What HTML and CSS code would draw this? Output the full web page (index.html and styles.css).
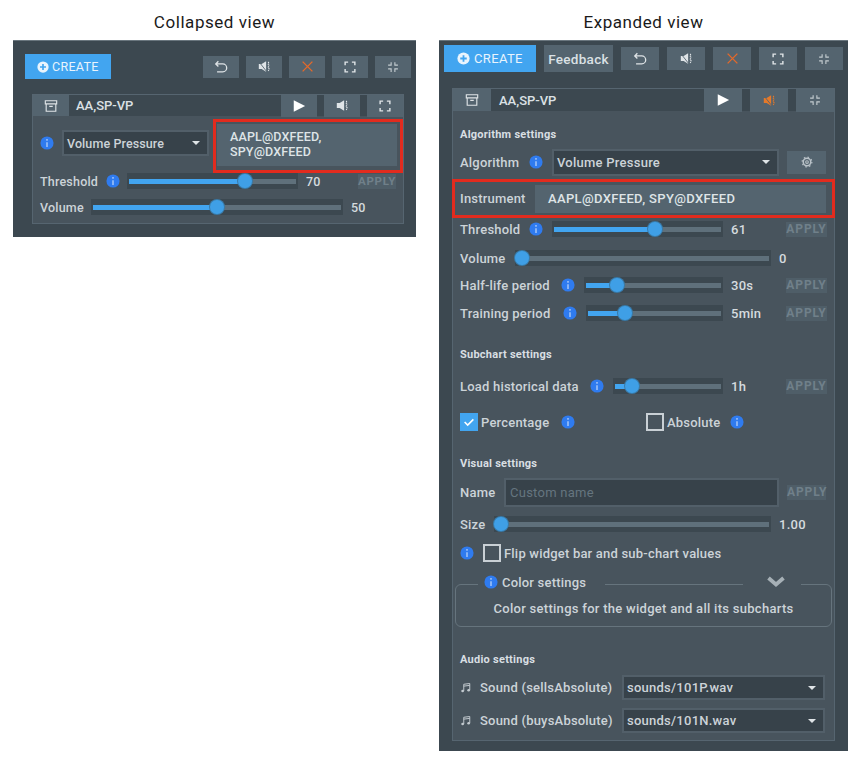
FILE: index.html
```html
<!DOCTYPE html>
<html lang="en">
<head>
<meta charset="utf-8">
<title>Collapsed and expanded view</title>
<link rel="stylesheet" href="styles.css">
</head>
<body>
<svg class="defs" width="0" height="0" aria-hidden="true">
  <symbol id="i-undo" viewBox="0 0 16 16"><path d="M5 1.500 2 4.500l3 3M2.500 4.500H10a4 4 0 0 1 0 9H3.500" fill="none" stroke="currentColor" stroke-width="1.500"/></symbol>
  <symbol id="i-mute" viewBox="0 0 16 16"><path d="M1 5h3.500L10 1.500v13L4.500 11H1z" fill="currentColor"/><path d="m1 2 9.500 12" stroke="#54646f" stroke-width="1.100"/><path d="M12.500 2.500c1.500 1 -.6 2.300 .6 3.500S11.500 9 13 10s-.5 2.500 0 3.500" fill="none" stroke="currentColor" stroke-width="1.500" stroke-dasharray="1.800 .8"/></symbol>
  <symbol id="i-sound" viewBox="0 0 16 16"><path d="M1 5h3.500L10 1.500v13L4.500 11H1z" fill="currentColor"/><path d="M12.500 2.500c1.500 1 -.6 2.300 .6 3.500S11.500 9 13 10s-.5 2.500 0 3.500" fill="none" stroke="currentColor" stroke-width="1.500" stroke-dasharray="1.800 .8"/></symbol>
  <symbol id="i-x" viewBox="0 0 16 16"><path d="m2 2 12 12M14 2 2 14" stroke="currentColor" stroke-width="1.700" fill="none"/></symbol>
  <symbol id="i-full" viewBox="0 0 16 16"><path d="M1.500 5.500v-4h4M10.500 1.500h4v4M14.500 10.500v4h-4M5.500 14.500h-4v-4" fill="none" stroke="currentColor" stroke-width="1.900"/></symbol>
  <symbol id="i-shrink" viewBox="0 0 16 16"><path d="M5.500 1.500v4H1.500M10.500 1.500v4h4M10.500 14.500v-4h4M5.500 14.500v-4H1.500" fill="none" stroke="currentColor" stroke-width="1.500"/></symbol>
  <symbol id="i-play" viewBox="0 0 16 16"><path d="M2 1.500 15 8 2 14.500z" fill="currentColor"/></symbol>
  <symbol id="i-archive" viewBox="0 0 16 16"><path d="M1.500 2h13v3.500h-13zM2.500 5.500V14h11V5.500M6 8.500h4" fill="none" stroke="currentColor" stroke-width="1.300"/></symbol>
  <symbol id="i-plus" viewBox="0 0 16 16"><circle cx="8" cy="8" r="7.500" fill="currentColor"/><path d="M8 4v8M4 8h8" stroke="#42a5f0" stroke-width="2.200"/></symbol>
  <symbol id="i-info" viewBox="0 0 16 16"><circle cx="8" cy="8" r="7.500" fill="#2f7bef"/><path d="M8 3.500v2M8 7v5.500" stroke="#9fc3f7" stroke-width="1.800"/></symbol>
  <symbol id="i-gear" viewBox="0 0 16 16"><circle cx="8" cy="8" r="1.800" fill="none" stroke="currentColor" stroke-width="1.400"/><circle cx="8" cy="8" r="5" fill="none" stroke="currentColor" stroke-width="2"/><circle cx="8" cy="8" r="6.500" fill="none" stroke="currentColor" stroke-width="1.600" stroke-dasharray="2 3.100"/></symbol>
  <symbol id="i-music" viewBox="0 0 16 16"><path d="M5 12V3l8-1v9" fill="none" stroke="currentColor" stroke-width="1.300"/><path d="M5 5.500 13 4.500" stroke="currentColor" stroke-width="1.300"/><circle cx="3.500" cy="12" r="1.800" fill="currentColor"/><circle cx="11.500" cy="11" r="1.800" fill="currentColor"/></symbol>
  <symbol id="i-check" viewBox="0 0 16 16"><path d="m3 8 3.500 3.500L13 5" fill="none" stroke="#fff" stroke-width="1.800"/></symbol>
  <symbol id="i-chev" viewBox="0 0 18 12"><path d="m1.500 2 7.500 6.500L16.500 2" fill="none" stroke="currentColor" stroke-width="3.800"/></symbol>
</svg>

<main class="page">
  <section class="col col-collapsed">
    <h2 class="view-title">Collapsed view</h2>
    <div class="panel panel-collapsed">
      <div class="topbar topbar-c">
        <button class="create create-c"><svg class="ic12"><use href="#i-plus"/></svg>CREATE</button>
        <span class="spacer"></span>
        <button class="btn btn-c"><svg class="ic14"><use href="#i-undo"/></svg></button>
        <button class="btn btn-c"><svg class="ic13"><use href="#i-mute"/></svg></button>
        <button class="btn btn-c orange"><svg class="ic13"><use href="#i-x"/></svg></button>
        <button class="btn btn-c"><svg class="ic12"><use href="#i-full"/></svg></button>
        <button class="btn btn-c dim"><svg class="ic12"><use href="#i-shrink"/></svg></button>
      </div>
      <div class="widget widget-c">
        <div class="wheader wheader-c">
          <span class="tab tab-c"><svg class="ic14"><use href="#i-archive"/></svg></span>
          <span class="wtitle">AA,SP-VP</span>
          <span class="spacer"></span>
          <button class="btn hbtn-c white"><svg class="ic14"><use href="#i-play"/></svg></button>
          <button class="btn hbtn-c"><svg class="ic13"><use href="#i-sound"/></svg></button>
          <button class="btn hbtn-c"><svg class="ic12"><use href="#i-full"/></svg></button>
        </div>
        <div class="c-body">
          <div class="c-first">
            <svg class="ic14 c-info"><use href="#i-info"/></svg>
            <div class="select c-select"><span>Volume Pressure</span><i class="caret"></i></div>
            <div class="marked c-marked"><div class="instr c-instr">AAPL@DXFEED,<br>SPY@DXFEED</div></div>
          </div>
          <div class="row c-threshold">
            <span class="label w-c-th">Threshold</span>
            <svg class="ic14 info c-i"><use href="#i-info"/></svg>
            <div class="slider" style="--v:.71"><div class="track"><div class="fill"></div></div><i class="thumb"></i></div>
            <span class="value c-val">70</span>
            <span class="apply c-apply">APPLY</span>
          </div>
          <div class="row c-volume">
            <span class="label w-c-vol">Volume</span>
            <div class="slider c-vol-slider" style="--v:.5"><div class="track"><div class="fill"></div></div><i class="thumb"></i></div>
            <span class="value c-val2">50</span>
          </div>
        </div>
      </div>
    </div>
  </section>

  <section class="col col-expanded">
    <h2 class="view-title">Expanded view</h2>
    <div class="panel panel-expanded">
      <div class="topbar topbar-e">
        <button class="create create-e"><svg class="ic13"><use href="#i-plus"/></svg>CREATE</button>
        <button class="feedback">Feedback</button>
        <button class="btn btn-e"><svg class="ic14"><use href="#i-undo"/></svg></button>
        <button class="btn btn-e"><svg class="ic13"><use href="#i-mute"/></svg></button>
        <button class="btn btn-e orange"><svg class="ic13"><use href="#i-x"/></svg></button>
        <button class="btn btn-e"><svg class="ic12"><use href="#i-full"/></svg></button>
        <button class="btn btn-e dim"><svg class="ic12"><use href="#i-shrink"/></svg></button>
      </div>
      <div class="widget widget-e">
        <div class="wheader wheader-e">
          <span class="tab tab-e"><svg class="ic14"><use href="#i-archive"/></svg></span>
          <span class="wtitle">AA,SP-VP</span>
          <span class="spacer"></span>
          <button class="btn hbtn-e white"><svg class="ic14"><use href="#i-play"/></svg></button>
          <button class="btn hbtn-e orange2"><svg class="ic13"><use href="#i-mute"/></svg></button>
          <button class="btn hbtn-e dim"><svg class="ic12"><use href="#i-shrink"/></svg></button>
        </div>
        <div class="e-body">
          <h3 class="section s-algo">Algorithm settings</h3>
          <div class="row r-algo">
            <span class="label w-th">Algorithm</span>
            <svg class="ic14 info"><use href="#i-info"/></svg>
            <div class="select e-select"><span>Volume Pressure</span><i class="caret"></i></div>
            <button class="btn gear"><svg class="ic12 gear-ic"><use href="#i-gear"/></svg></button>
          </div>
          <div class="marked e-marked">
            <span class="label">Instrument</span>
            <div class="instr e-instr">AAPL@DXFEED, SPY@DXFEED</div>
          </div>
          <div class="row r-th">
            <span class="label w-th">Threshold</span>
            <svg class="ic14 info"><use href="#i-info"/></svg>
            <div class="slider" style="--v:.61"><div class="track"><div class="fill"></div></div><i class="thumb"></i></div>
            <span class="value e-val">61</span>
            <span class="apply e-apply">APPLY</span>
          </div>
          <div class="row r-vol">
            <span class="label w-vol">Volume</span>
            <div class="slider s-gap" style="--v:0"><div class="track"><div class="fill"></div></div><i class="thumb"></i></div>
            <span class="value e-val2">0</span>
          </div>
          <div class="row r-half">
            <span class="label w-half">Half-life period</span>
            <svg class="ic14 info"><use href="#i-info"/></svg>
            <div class="slider" style="--v:.21"><div class="track"><div class="fill"></div></div><i class="thumb"></i></div>
            <span class="value e-val">30s</span>
            <span class="apply e-apply">APPLY</span>
          </div>
          <div class="row r-train">
            <span class="label w-train">Training period</span>
            <svg class="ic14 info"><use href="#i-info"/></svg>
            <div class="slider" style="--v:.26"><div class="track"><div class="fill"></div></div><i class="thumb"></i></div>
            <span class="value e-val">5min</span>
            <span class="apply e-apply">APPLY</span>
          </div>
          <h3 class="section s-sub">Subchart settings</h3>
          <div class="row r-load">
            <span class="label w-load">Load historical data</span>
            <svg class="ic14 info"><use href="#i-info"/></svg>
            <div class="slider" style="--v:.126"><div class="track"><div class="fill"></div></div><i class="thumb"></i></div>
            <span class="value e-val">1h</span>
            <span class="apply e-apply">APPLY</span>
          </div>
          <div class="row r-check">
            <span class="cbox on"><svg class="ic14"><use href="#i-check"/></svg></span>
            <span class="label cb-label w-pct">Percentage</span>
            <svg class="ic14 info"><use href="#i-info"/></svg>
            <span class="cb-gap"></span>
            <span class="cbox"></span>
            <span class="label cb-label w-abs">Absolute</span>
            <svg class="ic14 info"><use href="#i-info"/></svg>
          </div>
          <h3 class="section s-vis">Visual settings</h3>
          <div class="row r-name">
            <span class="label w-name">Name</span>
            <div class="input">Custom name</div>
            <span class="apply name-apply">APPLY</span>
          </div>
          <div class="row r-size">
            <span class="label w-size">Size</span>
            <div class="slider s-gap" style="--v:0"><div class="track"><div class="fill"></div></div><i class="thumb"></i></div>
            <span class="value e-val2">1.00</span>
          </div>
          <div class="row r-flip">
            <svg class="ic14 flip-info"><use href="#i-info"/></svg>
            <span class="cbox"></span>
            <span class="label cb-label">Flip widget bar and sub-chart values</span>
          </div>
          <div class="colorbox">
            <div class="legend">
              <svg class="ic14"><use href="#i-info"/></svg>
              <span class="label">Color settings</span>
            </div>
            <div class="legend-chev"><svg class="chev"><use href="#i-chev"/></svg></div>
            <p class="colortext">Color settings for the widget and all its subcharts</p>
          </div>
          <h3 class="section s-aud">Audio settings</h3>
          <div class="row r-snd">
            <svg class="ic12"><use href="#i-music"/></svg>
            <span class="label snd-label">Sound (sellsAbsolute)</span>
            <div class="select snd-select"><span>sounds/101P.wav</span><i class="caret"></i></div>
          </div>
          <div class="row r-snd r-snd2">
            <svg class="ic12"><use href="#i-music"/></svg>
            <span class="label snd-label">Sound (buysAbsolute)</span>
            <div class="select snd-select"><span>sounds/101N.wav</span><i class="caret"></i></div>
          </div>
        </div>
      </div>
    </div>
  </section>
</main>
</body>
</html>
```

FILE: styles.css
```css
* { box-sizing: border-box; }
html, body { margin: 0; padding: 0; background: #fff; }
body { font-family: Roboto, "Liberation Sans", sans-serif; font-size: 13px; font-weight: 500; color: #ccd3d8; width: 858px; height: 760px; overflow: hidden; }
.defs { position: absolute; }
svg { display: block; flex: none; }
.ic14 { width: 14px; height: 14px; }
.ic13 { width: 13px; height: 13px; }
.ic12 { width: 12px; height: 12px; }
button { font: inherit; color: inherit; border: 0; padding: 0; margin: 0; }
h2, h3, p { margin: 0; }

.page { display: flex; align-items: flex-start; color: #ccd3d8; }
.col-collapsed { width: 403px; margin-left: 13px; }
.col-expanded { width: 409px; margin-left: 23px; }
.view-title { height: 40px; padding-top: 11px; font-size: 17px; line-height: 22px; font-weight: 400; color: #1a1a1a; text-align: center; letter-spacing: .55px; }

.panel { background: #3c4850; border-top: 1px solid #6a767e; }
.panel-collapsed { height: 197px; padding: 13px 5px 0 12px; }
.panel-expanded { height: 711px; padding: 4px 5px 0 5px; }

.topbar { display: flex; align-items: center; }
.spacer { flex: 1; }
.topbar-c { gap: 7px; height: 25px; }
.topbar-e { gap: 8px; height: 27px; }

.btn { display: flex; align-items: center; justify-content: center; background: #54646f; color: #dfe4e7; }
.btn-c { width: 36px; height: 22px; }
.btn-e { width: 38px; height: 23px; }
.hbtn-c { width: 36px; height: 22px; }
.hbtn-e { width: 38px; height: 23px; }
.orange { color: #e4692a; }
.orange2 { color: #e4792a; }
.white { color: #fff; }
.dim { color: #c3cbd0; }

.create { display: flex; align-items: center; background: #42a5f0; color: #e9f4fd; font-weight: 400; }
.create-c { width: 86px; height: 25px; padding-left: 12px; gap: 3px; font-size: 12.500px; letter-spacing: .3px; }
.create-e { width: 92px; height: 27px; padding-left: 13px; gap: 4px; font-size: 13px; letter-spacing: .35px; }
.feedback { width: 69px; height: 27px; background: #54646f; color: #dbe1e5; font-size: 13.500px; letter-spacing: .3px; }

.widget { background: #48545d; border: 1px solid #566570; border-top: 0; }
.widget-c { width: 372px; height: 130px; margin: 15px 0 0 7px; }
.widget-e { width: 383px; height: 653px; margin: 16px 0 0 8px; }
.wheader { display: flex; align-items: center; background: #3c4850; border-top: 1px solid #566570; }
.wheader-c { height: 22px; gap: 7px; }
.wheader-e { height: 23px; gap: 8px; }
.tab { display: flex; align-items: center; justify-content: center; background: #54646f; color: #dfe4e7; height: 100%; }
.tab-c { width: 36px; }
.tab-e { width: 38px; }
.wtitle { font-size: 13px; color: #dbe1e5; }

.row { display: flex; align-items: center; }
.label { white-space: nowrap; letter-spacing: .2px; }
.info { margin: 0 9px 0 4px; }

.select { display: flex; align-items: center; justify-content: space-between; background: #37424a; border: 2px solid #525f69; padding: 0 7px 0 3px; letter-spacing: .25px; }
.caret { width: 0; height: 0; border: 4px solid transparent; border-top-color: #dfe4e7; border-bottom: 0; }
.marked { border: 3px solid #e22b1e; }
.instr { background: #54646f; color: #dfe4e7; letter-spacing: .35px; }

.slider { position: relative; flex: 1; height: 16px; background: #3c4850; padding: 0 2px; display: flex; align-items: center; }
.track { flex: 1; height: 5px; background: #5f707b; }
.fill { height: 100%; background: #42a5f0; width: calc(var(--v) * 100%); }
.thumb { position: absolute; top: 1px; width: 14px; height: 14px; left: calc(var(--v) * (100% - 14px)); border-radius: 50%; background: #3f9fe6; box-shadow: 0 0 0 1px #3a7ba8; }
.value { color: #d5dbdf; letter-spacing: .25px; }
.apply { font-size: 12px; letter-spacing: .9px; color: #70808a; background: #4f5e68; height: 15px; line-height: 15px; text-align: center; font-weight: 700; flex: none; }

/* collapsed */
.c-first { display: flex; align-items: flex-start; height: 54px; margin-top: 3px; padding-left: 7px; }
.c-info { margin: 17px 8px 0 0; }
.c-select { width: 147px; height: 26px; margin-top: 11px; font-size: 12.500px; letter-spacing: .1px; }
.c-marked { width: 190px; height: 54px; margin-left: 4px; padding: 2px 3px 2px 1px; }
.c-instr { height: 42px; padding: 5px 0 0 13px; line-height: 15px; font-size: 12.500px; letter-spacing: .15px; }
.c-threshold { margin: 0 7px; height: 16px; }
.c-threshold .slider { flex: none; width: 171px; }
.c-i { margin-right: 7px; }
.w-c-th { width: 62px; font-size: 12.500px; }
.w-c-vol { width: 44px; font-size: 12.500px; }
.c-val { width: 60px; padding-left: 8px; font-size: 12.500px; }
.c-apply { width: 38px; font-size: 11.500px; letter-spacing: .7px; }
.c-volume { margin: 10px 7px 0; height: 16px; }
.c-vol-slider { flex: none; width: 252px; margin-left: 7px; }
.c-val2 { padding-left: 8px; font-size: 12.500px; }

/* expanded */
.e-body { padding: 0 7px; }
.section { font-size: 11px; font-weight: 700; letter-spacing: .25px; line-height: 14px; color: #d9dfe3; }
.s-algo { margin-top: 17px; }
.r-algo { height: 28px; margin-top: 6px; }
.w-th { width: 65px; }
.w-vol { width: 48px; }
.w-half { width: 97px; }
.w-train { width: 99px; }
.w-load { width: 126px; }
.w-pct { width: 76px; }
.w-abs { width: 59px; }
.w-name { width: 37px; }
.w-size { width: 27px; }
.e-select { width: 227px; height: 27px; }
.gear { width: 39px; height: 23px; margin-left: 8px; color: #b9c2c8; }
.e-marked { display: flex; align-items: center; width: 383px; height: 39px; margin: 3px 0 0 -8px; padding-left: 5px; }
.e-marked .label { width: 75px; }
.e-instr { width: 291px; height: 28px; line-height: 28px; padding-left: 13px; }

.r-th, .r-half, .r-train, .r-load, .r-vol, .r-size { height: 16px; }
.r-th { margin-top: 3px; }
.r-vol { margin-top: 13px; }
.r-half { margin-top: 11px; }
.r-train { margin-top: 12px; }
.e-val { width: 63px; padding-left: 8px; }
.e-val2 { width: 56px; padding-left: 8px; }
.e-apply { width: 41px; }
.s-gap { margin-left: 7px; }
.s-sub { margin-top: 27px; }
.r-load { margin-top: 16px; }
.r-check { height: 18px; margin-top: 19px; }
.cbox { display: flex; align-items: center; justify-content: center; width: 18px; height: 18px; border: 2px solid #c9d0d5; flex: none; }
.cbox.on { background: #42a5f0; border-color: #42a5f0; }
.cb-label { margin-left: 3px; }
.cb-gap { width: 62px; }
.s-vis { margin-top: 26px; }
.r-name { height: 29px; margin-top: 7px; }
.input { width: 275px; height: 29px; margin-left: 7px; background: #37424a; border: 2px solid #525f69; line-height: 25px; padding-left: 4px; color: #65757f; font-weight: 400; letter-spacing: .25px; }
.name-apply { width: 39px; margin-left: 8px; }
.r-size { margin-top: 9px; }
.r-flip { height: 18px; margin-top: 12px; }
.flip-info { margin: 0 9px 0 0; }
.colorbox { position: relative; width: 377px; height: 43px; margin: 22px 0 0 -5px; border: 1px solid #66747d; border-radius: 6px; }
.legend { position: absolute; top: -14px; left: 22px; display: flex; align-items: center; gap: 4px; background: #48545d; padding: 2px 19px 2px 6px; height: 22px; }
.legend-chev { position: absolute; top: -12px; right: 30px; width: 58px; height: 15px; padding: 3px 0 0 8px; display: flex; justify-content: center; background: #48545d; color: #a6b0b6; }
.chev { width: 18px; height: 12px; }
.colortext { margin-top: 16px; text-align: center; letter-spacing: .28px; line-height: 15px; }
.s-aud { margin-top: 26px; }
.r-snd { height: 25px; margin-top: 8px; }
.r-snd2 { margin-top: 8px; }
.r-snd svg { color: #c3cbd0; }
.snd-label { margin-left: 8px; width: 142px; }
.snd-select { width: 203px; height: 25px; }
```
